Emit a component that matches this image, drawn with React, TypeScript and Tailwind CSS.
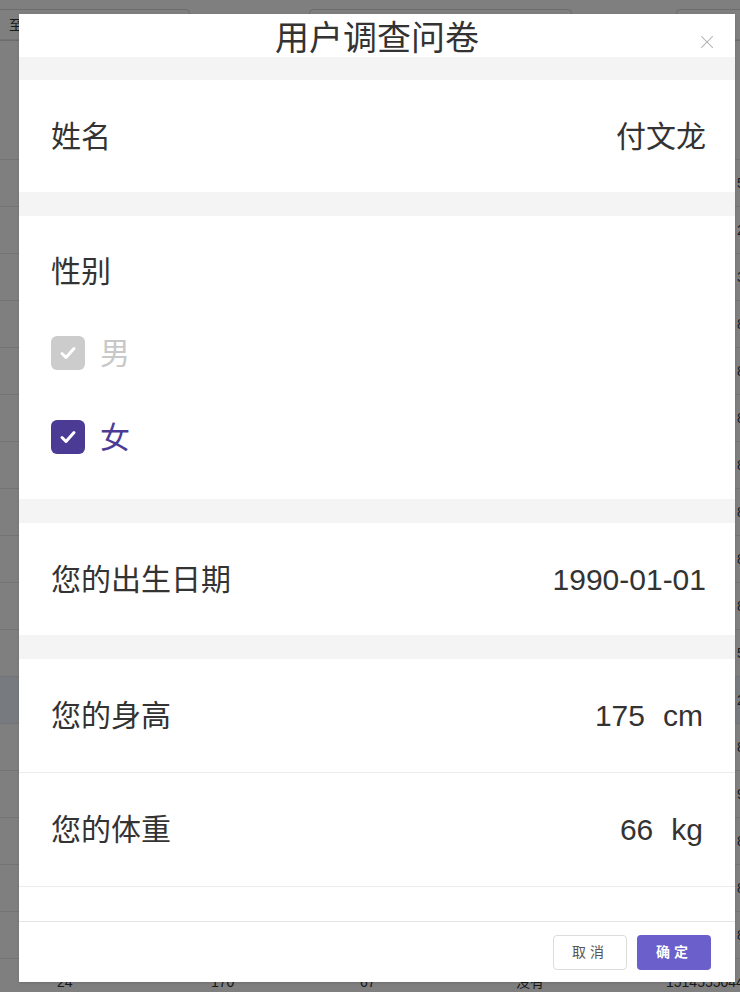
import { X } from "lucide-react";

const rowDigits = ["5", "2", "3", "8", "8", "8", "8", "8", "8", "8", "5", "2", "8", "9", "8", "8", "8"];

function Check() {
  return (
    <svg width="20" height="20" viewBox="0 0 20 20" fill="none">
      <path d="M4 10.5l4 4 8-9" stroke="white" strokeWidth="3" strokeLinecap="round" strokeLinejoin="round" />
    </svg>
  );
}

function Row({ label, children, border }: { label: string; children: React.ReactNode; border?: boolean }) {
  return (
    <div
      className={`flex items-center justify-between px-8 text-[30px] text-[#333] ${
        border ? "h-[114px] border-b border-[#ececec]" : "h-[112px]"
      }`}
    >
      <span>{label}</span>
      <span className={border ? "mr-[0px]" : "mr-[-3px]"}>{children}</span>
    </div>
  );
}

export default function App() {
  return (
    <div className="relative h-[992px] w-[740px] overflow-hidden bg-white font-['Liberation_Sans','Noto_Sans_CJK_SC',sans-serif] text-[#333]">
      {/* page behind the modal */}
      <div className="flex h-[40px] items-start border-b border-[#e8e8e8] pt-[9px]">
        <div className="ml-[-10px] flex h-[32px] w-[200px] shrink-0 items-center rounded border border-[#d9d9d9] pl-[18px] text-sm">至</div>
        <div className="ml-[119px] h-[32px] w-[263px] shrink-0 rounded border border-[#d9d9d9]" />
        <div className="ml-[104px] flex h-[32px] w-[80px] shrink-0 items-center rounded border border-[#d9d9d9] pl-[62px] text-sm">目</div>
      </div>
      <div className="mt-[119px]">
        {rowDigits.map((d, i) => (
          <div
            key={i}
            className={`flex h-[47px] items-center border-t border-[#e8e8e8] text-sm ${i === 11 ? "bg-[#eef5fd]" : ""}`}
          >
            <span className="ml-[737px]">{d}</span>
          </div>
        ))}
        <div className="relative flex h-[47px] items-center border-t border-[#e8e8e8] text-sm">
          <span className="absolute left-[57px]">24</span>
          <span className="absolute left-[211px]">170</span>
          <span className="absolute left-[360px]">67</span>
          <span className="absolute left-[516px]">没有</span>
          <span className="absolute left-[666px]">15145550448</span>
        </div>
      </div>
      <div className="absolute inset-0 bg-black/50" />

      {/* modal */}
      <div className="absolute left-[19px] top-[14px] flex h-[968px] w-[716px] flex-col bg-white shadow-sm">
        <div className="relative flex h-[43px] items-center justify-center">
          <h1 className="mt-[5px] text-[34px] font-normal leading-[43px] text-[#333]">用户调查问卷</h1>
          <button className="absolute right-[17px] top-[17px] text-[#aaa]">
            <X size={22} strokeWidth={1.1} />
          </button>
        </div>
        <div className="h-[23px] bg-[#f4f4f4]" />
        <Row label="姓名">付文龙</Row>
        <div className="h-6 bg-[#f4f4f4]" />
        <div className="flex h-[283px] flex-col px-8 text-[30px]">
          <div className="mt-[35px] flex h-10 items-center text-[#333]">性别</div>
          <label className="mt-[41px] flex h-[42px] items-center gap-[15px] text-[#c8c8c8]">
            <span className="flex h-[34px] w-[34px] items-center justify-center rounded-[6px] bg-[#cccccc]">
              <Check />
            </span>
            男
          </label>
          <label className="mt-[42px] flex h-[42px] items-center gap-[15px] text-[#4b3b95]">
            <span className="flex h-[34px] w-[34px] items-center justify-center rounded-[6px] bg-[#4b3b95]">
              <Check />
            </span>
            女
          </label>
        </div>
        <div className="h-6 bg-[#f4f4f4]" />
        <Row label="您的出生日期">1990-01-01</Row>
        <div className="h-6 bg-[#f4f4f4]" />
        <Row label="您的身高" border>
          175<span className="ml-[18px]">cm</span>
        </Row>
        <Row label="您的体重" border>
          66<span className="ml-[18px]">kg</span>
        </Row>
        <div className="flex-1" />
        <div className="flex h-[61px] items-center justify-end gap-[10px] border-t border-[#e5e5e5] pr-6">
          <button className="h-[35px] w-[74px] rounded border border-[#dcdcdc] bg-white text-sm tracking-[4px] text-[#555]">
            取消
          </button>
          <button className="h-[35px] w-[74px] rounded bg-[#6a5fcb] text-sm font-semibold tracking-[4px] text-white">
            确定
          </button>
        </div>
      </div>
    </div>
  );
}
